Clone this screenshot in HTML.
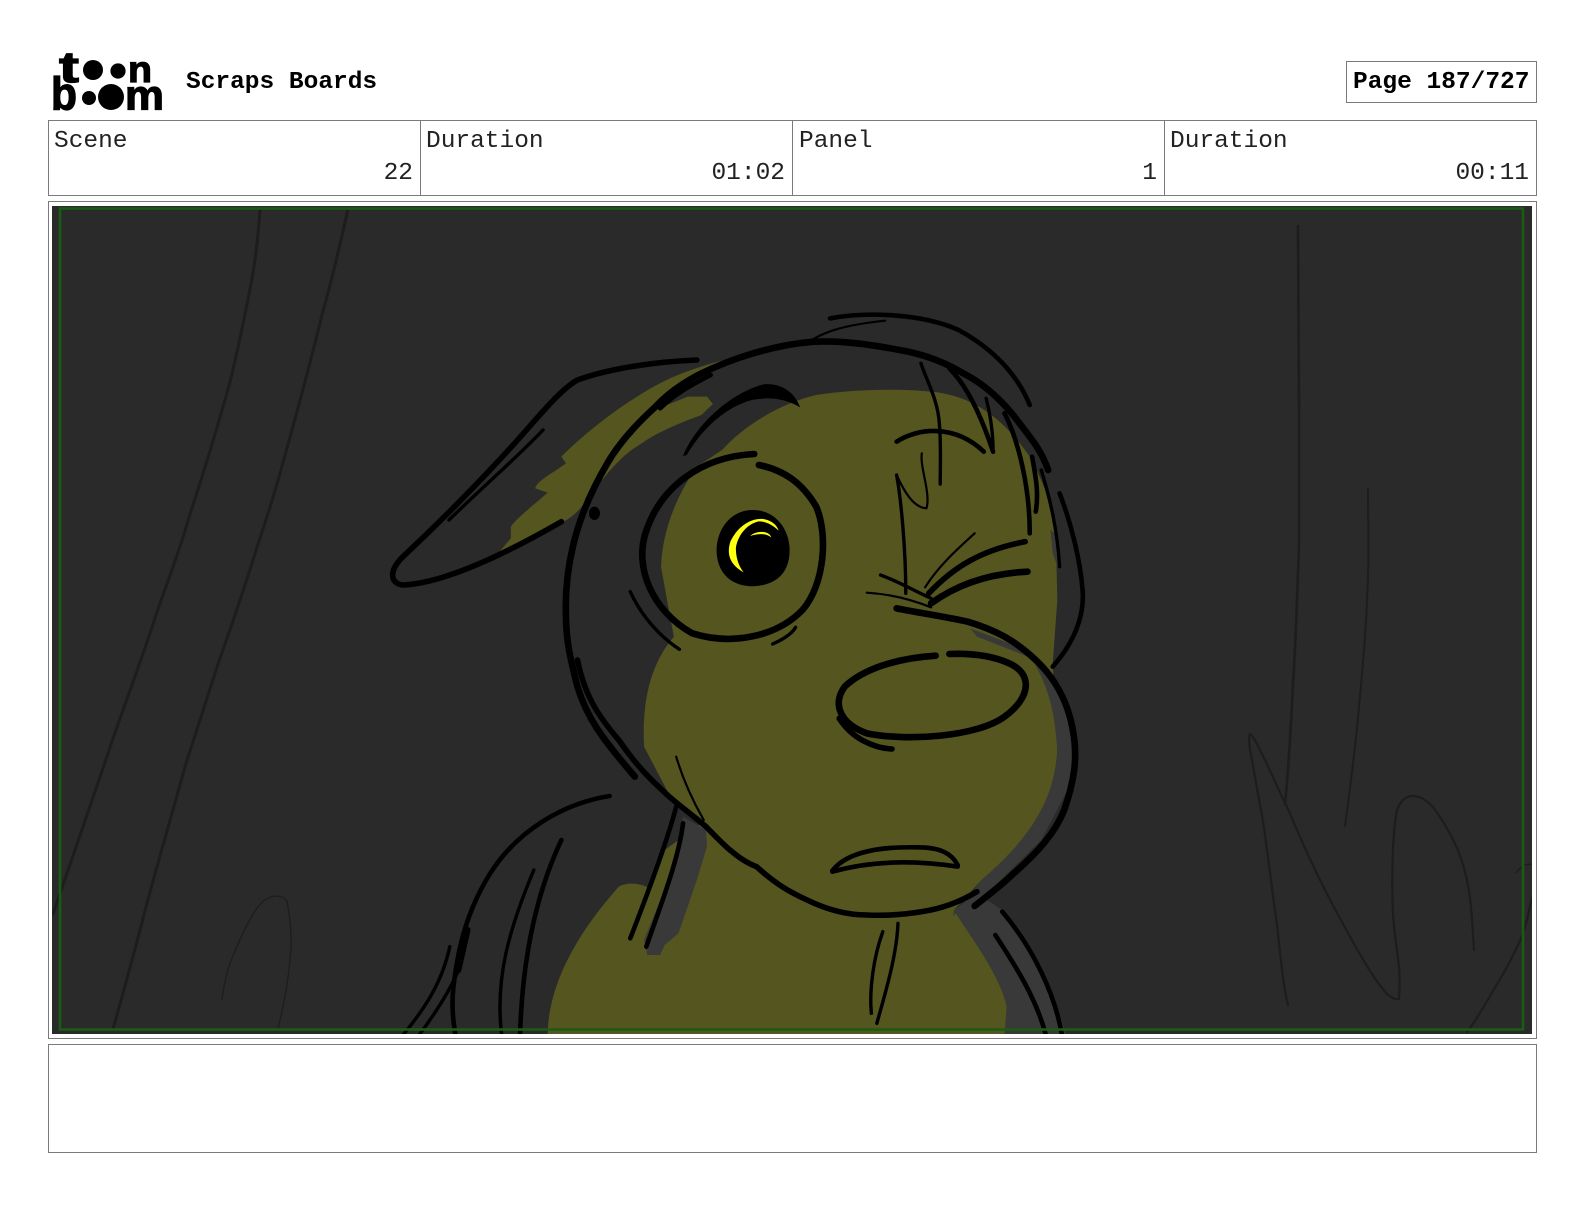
<!DOCTYPE html>
<html><head><meta charset="utf-8"><style>
html,body{margin:0;padding:0;background:#fff}
#p{position:relative;width:1584px;height:1224px;overflow:hidden;background:#fff;font-family:"Liberation Mono",monospace;color:#000}
.b{position:absolute;box-sizing:border-box;border:1.5px solid #7a7a7a}
.t{position:absolute;font-size:24.5px;line-height:28px;white-space:pre;color:#222}
.h{font-weight:bold;color:#000}
svg{position:absolute;left:0;top:0}
#art path{vector-effect:non-scaling-stroke;fill:none;stroke:#000;stroke-linecap:round;stroke-linejoin:round}
#art path.f{fill:#000;stroke:none}
#art path.o{fill:#55551f;stroke:none}
#art path.g{fill:#393939;stroke:none}
#art path.y{fill:#ffff10;stroke:none}
.w2{stroke-width:2.2}.w3{stroke-width:3.4}.w4{stroke-width:4.6}.w5{stroke-width:5.6}.w6{stroke-width:6.6}
#bg path{fill:none;stroke:#1d1d1d;stroke-linecap:round;stroke-linejoin:round}
</style></head><body><div id="p">
<svg width="1584" height="1224" viewBox="0 0 1584 1224">
 <g fill="#000" stroke="#000" stroke-width="1.2" font-family="Liberation Sans" font-weight="bold">
  <text x="59" y="82" font-size="44" textLength="20" lengthAdjust="spacingAndGlyphs">t</text>
  <text x="128" y="82" font-size="37" textLength="24" lengthAdjust="spacingAndGlyphs">n</text>
  <text x="51" y="109.5" font-size="46" textLength="26" lengthAdjust="spacingAndGlyphs">b</text>
  <text x="125" y="109.5" font-size="42" textLength="39" lengthAdjust="spacingAndGlyphs">m</text>
 </g>
 <g fill="#000">
  <circle cx="93" cy="70" r="10"/><circle cx="118" cy="71" r="7.6"/>
  <circle cx="89" cy="98" r="7"/><circle cx="111" cy="97" r="13"/>
 </g>
</svg>
<div class="t h" style="left:186px;top:69px">Scraps Boards</div>
<div class="b" style="left:1346px;top:61px;width:191px;height:42px"></div>
<div class="t h" style="left:1353px;top:69px">Page 187/727</div>

<div class="b" style="left:48px;top:120px;width:1489px;height:76px"></div>
<div class="b" style="left:420px;top:120px;width:1.5px;height:76px;border-width:0 0 0 1.5px"></div>
<div class="b" style="left:792px;top:120px;width:1.5px;height:76px;border-width:0 0 0 1.5px"></div>
<div class="b" style="left:1164px;top:120px;width:1.5px;height:76px;border-width:0 0 0 1.5px"></div>
<div class="t" style="left:54px;top:128px">Scene</div>
<div class="t" style="left:426px;top:128px">Duration</div>
<div class="t" style="left:799px;top:128px">Panel</div>
<div class="t" style="left:1170px;top:128px">Duration</div>
<div class="t" style="right:1171px;top:160px">22</div>
<div class="t" style="right:799px;top:160px">01:02</div>
<div class="t" style="right:427px;top:160px">1</div>
<div class="t" style="right:55px;top:160px">00:11</div>

<div class="b" style="left:48px;top:201px;width:1489px;height:838px"></div>
<div class="b" style="left:48px;top:1044px;width:1489px;height:109px"></div>

<svg width="1584" height="1224" viewBox="0 0 1584 1224">
 <defs><clipPath id="c"><rect x="52" y="206" width="1480" height="828"/></clipPath></defs>
 <rect x="52" y="206" width="1480" height="828" fill="#2a2a2a"/>
 <g clip-path="url(#c)">
  <g id="bg">
   <path stroke-width="3" d="M260,209C258,240 255,265 250,289C243,325 236,360 227,393C215,435 203,475 190,514C180,550 168,580 157,612C145,650 130,690 117,727C107,757 97,785 87,815C75,850 63,885 53,914"/>
   <path stroke-width="3" d="M348,209C340,245 332,280 323,311C311,360 299,405 287,448C278,482 268,515 257,547C244,590 230,630 217,667C207,698 197,730 187,760C173,810 160,855 147,903C135,950 124,990 113,1029"/>
   <path stroke-width="1.3" d="M222,999C224,985 226,975 230,963C238,943 247,923 257,908C263,900 270,896 277,896C285,897 288,900 288,908C291,922 291,935 291,947C290,965 288,980 285,996C283,1008 280,1020 278,1029"/>
   <path stroke-width="2.6" d="M1298,226C1298,290 1299,350 1299,409C1299,460 1299,505 1299,547C1297,595 1296,640 1293,684C1291,725 1289,765 1285,804"/>
   <path stroke-width="2" d="M1368,489C1368,520 1369,550 1368,574C1367,610 1365,642 1362,673C1358,725 1352,775 1345,826"/>
   <path stroke-width="2.2" d="M1288,1005C1282,980 1280,950 1277,925C1272,890 1268,855 1263,821C1258,795 1254,770 1250,750C1249,742 1249,736 1250,734C1252,735 1255,740 1257,744C1268,765 1277,787 1287,807C1295,825 1302,842 1310,859C1322,885 1334,908 1347,931C1360,955 1373,978 1387,994C1392,998 1396,1000 1399,999C1400,985 1400,972 1398,958C1396,943 1394,930 1393,914C1392,890 1392,870 1393,848C1394,830 1395,820 1397,810C1401,800 1406,796 1413,796C1421,796 1427,801 1433,807C1443,820 1450,833 1457,848C1464,865 1468,882 1470,898C1472,915 1473,932 1474,950"/>
   <path stroke-width="2.2" d="M1532,898C1528,915 1525,930 1520,941C1512,958 1503,975 1493,991C1485,1005 1476,1020 1467,1032"/>
   <path stroke-width="1.3" d="M1516,873C1519,869 1522,866 1525,865L1532,864"/>
  </g>
  <g id="art" transform="translate(380,300) scale(0.4592,0.33333)">
   <!-- ear fill -->
   <path class="o" d="M745,182C680,205 620,235 560,290C500,340 430,420 395,470L405,490C375,520 340,545 338,565L365,578C340,610 300,650 285,680L285,715L262,752C320,730 370,690 400,665C420,650 440,625 455,590C490,530 520,470 570,430C600,400 650,370 700,345L725,312L712,290L670,290L625,315L640,280C680,240 720,210 770,188Z"/>
   <!-- face + body fill -->
   <path class="o" d="M745,450C790,380 870,310 950,285C1030,268 1130,265 1200,275C1280,285 1350,340 1415,470C1450,560 1470,640 1472,720L1475,900L1465,1090L1475,1350C1470,1480 1430,1600 1310,1740L1250,1830C1280,1900 1350,2020 1365,2120L1360,2210L365,2210C365,2080 410,1930 520,1760C540,1745 570,1750 585,1765L620,1650L700,1570L640,1510L575,1340C570,1200 590,1090 640,1010L625,900L612,800C615,700 640,600 690,500Z"/>
   <!-- grey bands -->
   <path class="g" d="M1285,985L1400,1045L1480,1150L1515,1300L1505,1450L1440,1620L1300,1810L1250,1830L1248,1850L1310,1740C1430,1600 1470,1480 1475,1350C1470,1250 1460,1190 1440,1130L1420,1075L1300,1010Z"/>
   <path class="g" d="M660,1550L710,1590L712,1640L690,1740L650,1900L620,1935L610,1965L582,1965L575,1920L640,1700Z"/>
   <path class="g" d="M1250,1830L1300,1780L1360,1835C1420,1950 1470,2080 1495,2210L1360,2210L1365,2120C1350,2020 1280,1900 1250,1830Z"/>
   <path class="g" d="M1460,690L1475,705L1475,800L1465,760Z"/>

   <!-- head outline -->
   <path class="w6" d="M945,125C850,135 760,180 700,220C650,255 620,290 600,320C560,370 520,430 495,490C465,560 435,650 420,740C408,810 403,880 405,950C405,1020 415,1080 430,1160C450,1250 480,1310 555,1430"/>
   <path class="w5" d="M430,1080C445,1180 470,1240 520,1320C560,1400 590,1440 630,1490C655,1520 685,1550 710,1580C745,1630 780,1680 820,1700C860,1750 890,1775 930,1800C975,1830 1020,1845 1060,1845C1110,1848 1150,1842 1180,1835C1230,1825 1270,1800 1300,1775"/>
   <path class="w6" d="M945,125C1000,122 1060,130 1150,155C1200,170 1240,195 1270,220C1320,255 1360,310 1390,365C1420,420 1440,450 1455,510"/>
   <path class="w3" d="M1440,510C1460,600 1475,690 1480,800"/>
   <path class="w4" d="M1480,580C1505,670 1525,780 1530,870C1535,950 1510,1030 1465,1100"/>
   <path class="w6" d="M1125,925C1180,940 1230,950 1280,965C1340,990 1380,1020 1420,1070C1470,1130 1500,1210 1510,1300C1520,1380 1510,1450 1490,1530C1470,1600 1430,1660 1380,1720C1350,1760 1320,1790 1295,1818"/>
   <path class="w4" d="M610,325C640,285 670,260 720,225"/>
   <path class="f" d="M455,640a12,20 0 1,0 24,0a12,20 0 1,0 -24,0Z"/>
   <!-- hair -->
   <path class="w4" d="M980,55C1060,35 1180,40 1260,90C1340,150 1390,230 1415,315"/>
   <path class="w2" d="M940,120C970,95 1010,75 1100,62"/>
   <path class="w3" d="M1178,190C1190,240 1215,300 1218,370C1222,430 1220,500 1220,552"/>
   <path class="w4" d="M1240,205C1280,260 1310,350 1335,455"/>
   <path class="w3" d="M1320,295C1330,350 1335,400 1335,450"/>
   <path class="w4" d="M1360,340C1390,420 1415,560 1415,700"/>
   <path class="w4" d="M1420,470C1428,530 1435,580 1428,635"/>
   <!-- brow fat -->
   <path class="f" d="M660,468C685,380 760,280 835,253C880,248 905,285 915,322C880,295 850,290 810,300C750,322 700,390 668,465Z"/>
   <!-- left eye -->
   <path class="w6" d="M815,462C700,470 610,560 578,700C555,800 590,930 680,1000C760,1035 860,1015 920,930C970,850 975,700 950,620C920,550 880,510 825,495"/>
   <path class="w3" d="M545,875C570,950 610,1010 652,1048"/>
   <path class="w3" d="M855,1032C875,1020 895,1005 905,982"/>
   <path class="f" d="M812,630C862,630 892,690 892,750C892,820 862,857 810,859C758,857 733,810 733,750C733,690 763,630 812,630Z"/>
   <path class="y" d="M792,817C760,792 755,760 763,725C778,682 805,654 835,657C855,662 865,677 868,692C855,674 840,664 825,664C797,672 778,710 775,745C775,775 782,800 792,817Z"/>
   <path class="y" d="M806,708C820,690 848,692 852,712C840,700 825,700 806,708Z"/>
   <!-- right eye -->
   <path class="w4" d="M1125,425C1170,385 1250,370 1315,455"/>
   <path class="w3" d="M1125,525C1135,600 1145,750 1145,880"/>
   <path class="w2" d="M1125,525C1140,570 1160,622 1190,625C1200,580 1175,500 1180,460"/>
   <path class="w2" d="M1187,862C1215,800 1255,750 1295,700"/>
   <path class="w5" d="M1195,880C1250,800 1310,750 1405,725"/>
   <path class="w6" d="M1200,910C1260,850 1330,820 1410,815"/>
   <path class="w3" d="M1090,825C1130,845 1160,870 1200,895"/>
   <path class="w2" d="M1060,878C1110,882 1160,900 1200,922"/>
   <!-- nose -->
   <path class="w6" d="M1210,1067C1120,1075 1050,1110 1012,1160C985,1210 1000,1270 1060,1300C1150,1325 1300,1310 1360,1250C1420,1190 1420,1120 1370,1090C1330,1065 1280,1060 1240,1062"/>
   <path class="w5" d="M1000,1255C1030,1320 1080,1345 1115,1347"/>
   <!-- mouth -->
   <path class="w4" d="M985,1712C1020,1650 1100,1640 1170,1642C1220,1642 1245,1660 1258,1695"/>
   <path class="w4" d="M985,1715C1050,1690 1140,1675 1258,1700"/>
   <!-- face-to-neck thin line -->
   <path class="w2" d="M645,1370C660,1440 680,1500 705,1560"/>
   <!-- neck -->
   <path class="w4" d="M645,1520C630,1600 600,1720 545,1915"/>
   <path class="w4" d="M660,1570C650,1680 610,1820 580,1940"/>
   <path class="w3" d="M1095,1895C1075,1970 1065,2070 1070,2140"/>
   <path class="w3" d="M1128,1870C1125,1970 1100,2080 1082,2170"/>
   <!-- ear -->
   <path class="w5" d="M690,180C600,185 500,205 430,240C390,270 340,360 280,450C200,570 120,680 50,770C20,810 20,850 50,855C130,850 250,780 395,665"/>
   <path class="w3" d="M355,390C300,470 240,540 150,660"/>
   <!-- shoulders -->
   <path class="w4" d="M500,1488C400,1510 300,1590 240,1720C190,1830 170,1940 160,2060C155,2120 160,2170 165,2210"/>
   <path class="w6" d="M190,1890L170,2010"/>
   <path class="w3" d="M152,1940C135,2050 95,2130 50,2205"/>
   <path class="w3" d="M168,2020C145,2090 115,2150 85,2205"/>
   <path class="w4" d="M395,1620C340,1780 310,1970 305,2205"/>
   <path class="w3" d="M335,1710C280,1890 250,2040 265,2205"/>
   <path class="w4" d="M1355,1835C1420,1940 1470,2080 1485,2205"/>
   <path class="w4" d="M1340,1905C1390,2010 1430,2100 1450,2205"/>
  </g>
 </g>
 <rect x="60" y="208.5" width="1463" height="821" fill="none" stroke="#1a5c14" stroke-width="2.6"/>
</svg>
</div></body></html>
